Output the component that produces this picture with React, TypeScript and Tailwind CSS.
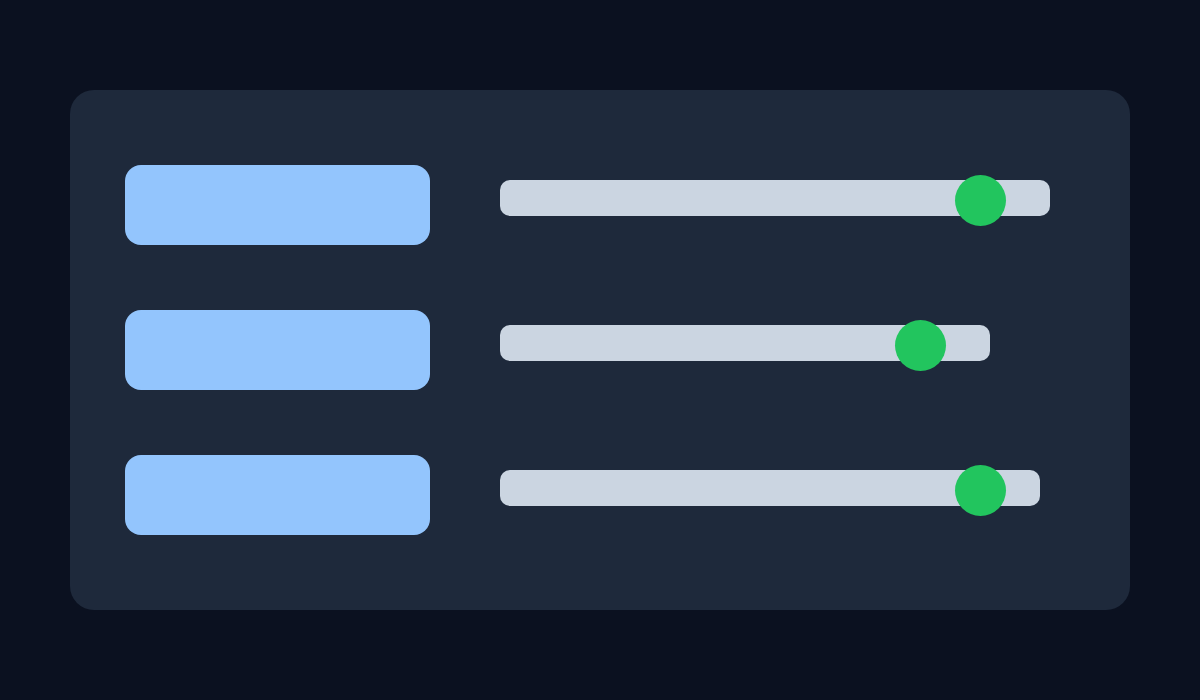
import React from 'react'

const rows = [
  { track: 550, knob: 455 },
  { track: 490, knob: 395 },
  { track: 540, knob: 455 },
]

const SliderRow = ({ track, knob }: { track: number; knob: number }) => (
  <div className="flex items-start gap-[70px]">
    <div className="h-[80px] w-[305px] rounded-2xl bg-[#93c5fd]" />
    <div className="relative mt-[15px] h-[36px] rounded-[10px] bg-[#cbd5e1]" style={{ width: track }}>
      <div
        className="absolute -top-[5px] h-[51px] w-[51px] rounded-full bg-[#22c55e]"
        style={{ left: knob }}
      />
    </div>
  </div>
)

export default function App() {
  return (
    <div className="flex h-[700px] w-full items-center justify-center bg-[#0b1120]">
      <div className="flex h-[520px] w-[1060px] flex-col gap-[65px] rounded-3xl bg-[#1e293b] px-[55px] pt-[75px]">
        {rows.map((r, i) => (
          <SliderRow key={i} track={r.track} knob={r.knob} />
        ))}
      </div>
    </div>
  )
}
